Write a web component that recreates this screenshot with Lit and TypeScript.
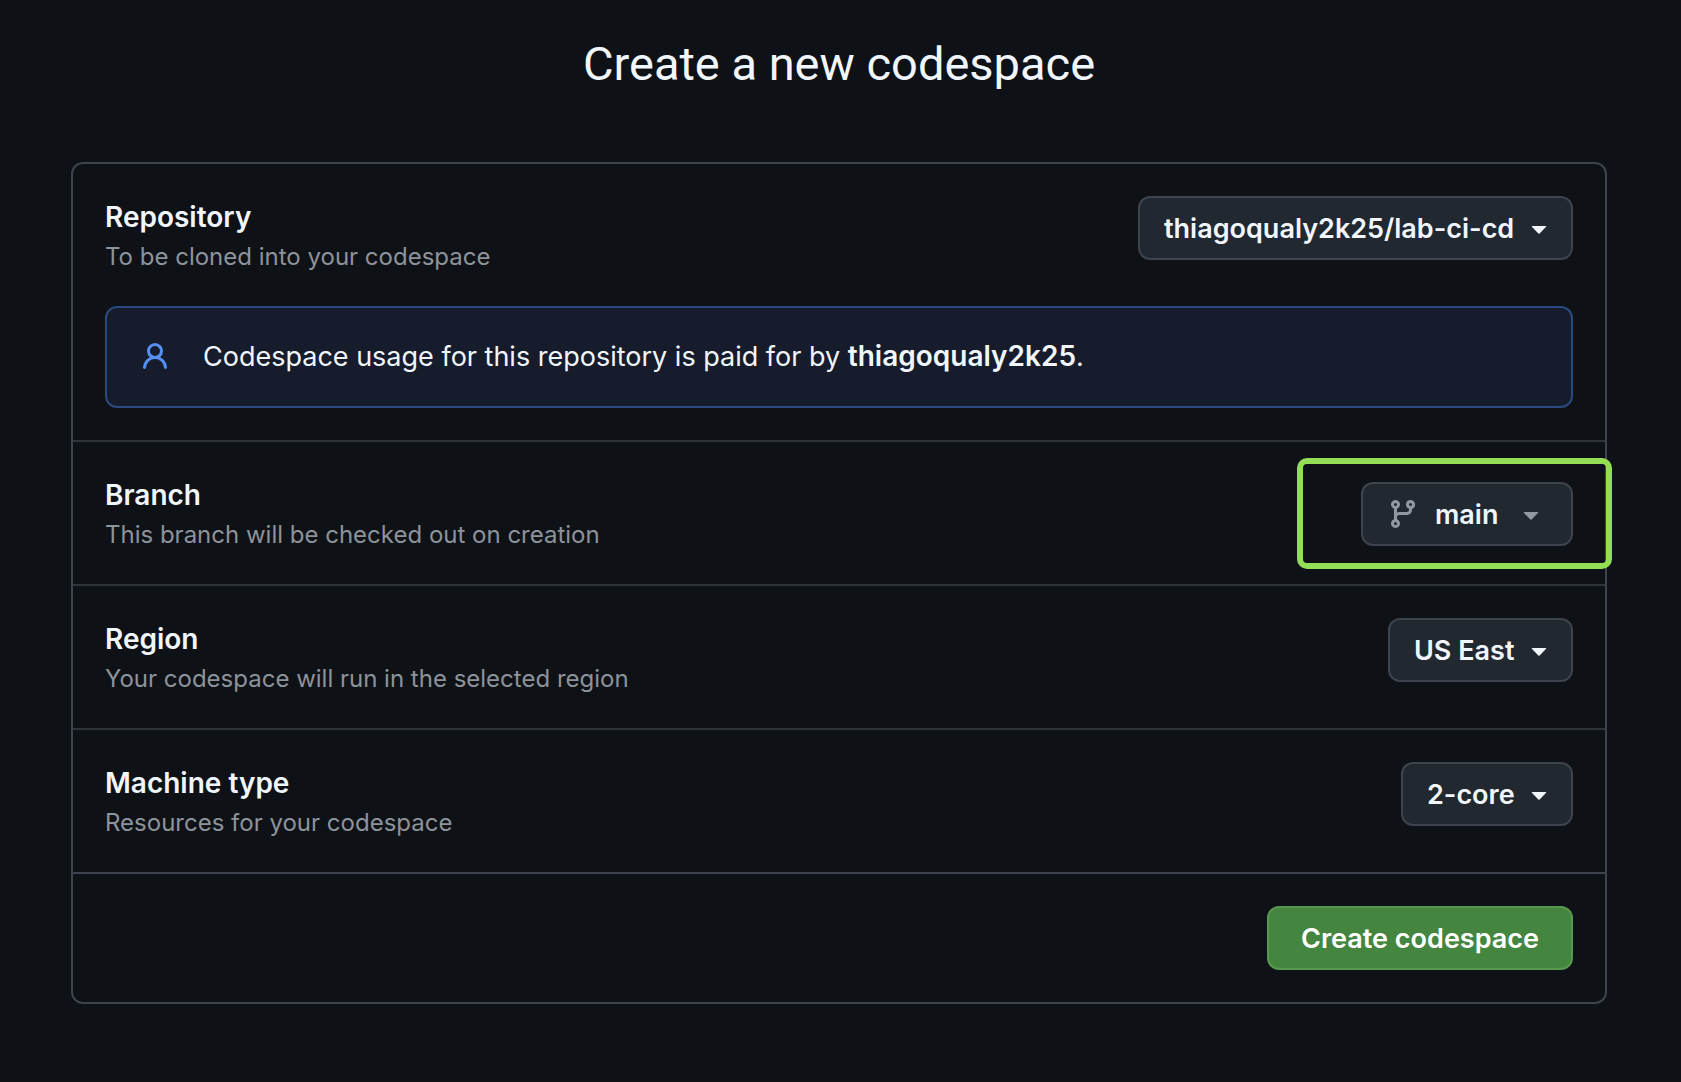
import { LitElement, html, css, svg, nothing } from "lit";
import { customElement, property } from "lit/decorators.js";

const personPath = svg`<path d="M10.561 8.073a6.005 6.005 0 0 1 3.432 5.142.75.75 0 1 1-1.498.07 4.5 4.5 0 0 0-8.99 0 .75.75 0 0 1-1.498-.07 6.004 6.004 0 0 1 3.431-5.142 3.999 3.999 0 1 1 5.123 0ZM10.5 5a2.5 2.5 0 1 0-5 0 2.5 2.5 0 0 0 5 0Z"/>`;
const branchPath = svg`<path d="M9.5 3.25a2.25 2.25 0 1 1 3 2.122V6A2.5 2.5 0 0 1 10 8.5H6a1 1 0 0 0-1 1v1.128a2.251 2.251 0 1 1-1.5 0V5.372a2.25 2.25 0 1 1 1.5 0v1.836A2.493 2.493 0 0 1 6 7h4a1 1 0 0 0 1-1v-.628A2.25 2.25 0 0 1 9.5 3.25Zm-6 0a.75.75 0 1 0 1.5 0 .75.75 0 0 0-1.5 0Zm8.25-.75a.75.75 0 1 0 0 1.5.75.75 0 0 0 0-1.5ZM4.25 12a.75.75 0 1 0 0 1.5.75.75 0 0 0 0-1.5Z"/>`;
const caretPath = svg`<path d="m4.427 7.427 3.396 3.396a.25.25 0 0 0 .354 0l3.396-3.396A.25.25 0 0 0 11.396 7H4.604a.25.25 0 0 0-.177.427Z"/>`;

interface Setting {
  id: string;
  title: string;
  hint: string;
  value: string;
  branch?: boolean;
  payer?: string;
}

const settings: Setting[] = [
  {
    id: "repository",
    title: "Repository",
    hint: "To be cloned into your codespace",
    value: "thiagoqualy2k25/lab-ci-cd",
    payer: "thiagoqualy2k25",
  },
  { id: "branch", title: "Branch", hint: "This branch will be checked out on creation", value: "main", branch: true },
  { id: "region", title: "Region", hint: "Your codespace will run in the selected region", value: "US East" },
  { id: "machine", title: "Machine type", hint: "Resources for your codespace", value: "2-core" },
];

@customElement("setting-row")
class SettingRow extends LitElement {
  @property({ attribute: false }) setting!: Setting;

  static styles = css`
    :host {
      display: block;
      padding: 32px;
    }
    .line {
      display: flex;
      justify-content: space-between;
      align-items: flex-start;
      gap: 32px;
    }
    .title {
      display: block;
      font-size: 28px;
      line-height: 43px;
      font-weight: 600;
    }
    .hint {
      margin: 0;
      font-size: 24px;
      line-height: 35px;
      color: #8d939b;
    }
    .picker {
      display: grid;
      align-items: center;
      position: relative;
      color: #f0f6fc;
    }
    .picker > * {
      grid-area: 1 / 1;
    }
    .picker.branch {
      margin-top: 8px;
    }
    .icon {
      width: 32px;
      height: 32px;
      fill: currentColor;
      pointer-events: none;
    }
    .caret {
      justify-self: end;
      margin-right: 18px;
    }
    .branch .caret {
      margin-right: 26px;
    }
    .lead {
      margin-left: 26px;
    }
    .branch .icon {
      color: #9198a1;
    }
    select {
      appearance: none;
      box-sizing: border-box;
      height: 64px;
      margin: 0;
      padding: 0 56px 0 24px;
      border: 2px solid #3d444d;
      border-radius: 12px;
      background: #212830;
      color: inherit;
      font: inherit;
      font-size: 27px;
      font-weight: 600;
      cursor: pointer;
    }
    .branch select {
      padding: 0 72px;
    }
    .highlight {
      position: absolute;
      inset: -24px -39px -23px -64px;
      border: 6px solid #94de56;
      border-radius: 10px;
      pointer-events: none;
    }
    .notice {
      display: flex;
      align-items: center;
      gap: 32px;
      margin-top: 32px;
      padding: 28px 32px;
      border: 2px solid #2b4a80;
      border-radius: 12px;
      background: #161c2b;
      font-size: 27px;
      line-height: 42px;
    }
    .notice p {
      margin: 0;
    }
    .notice b {
      font-size: 28px;
      line-height: 28px;
      font-weight: 600;
    }
    .notice .icon {
      flex: none;
      color: #5590f5;
    }
  `;

  render() {
    const s = this.setting;
    return html`
      <div class="line">
        <div>
          <label class="title" for=${s.id}>${s.title}</label>
          <p class="hint">${s.hint}</p>
        </div>
        <div class="picker ${s.branch ? "branch" : ""}">
          <select id=${s.id}>
            <option>${s.value}</option>
          </select>
          ${s.branch ? html`<svg class="icon lead" viewBox="0 0 16 16" aria-hidden="true">${branchPath}</svg>` : nothing}
          <svg class="icon caret" viewBox="0 0 16 16" aria-hidden="true">${caretPath}</svg>
          ${s.branch ? html`<span class="highlight"></span>` : nothing}
        </div>
      </div>
      ${s.payer
        ? html`<div class="notice">
            <svg class="icon" viewBox="0 0 16 16" aria-hidden="true">${personPath}</svg>
            <p>Codespace usage for this repository is paid for by <b>${s.payer}</b>.</p>
          </div>`
        : nothing}
    `;
  }
}

@customElement("app-root")
class AppRoot extends LitElement {
  static styles = css`
    :host {
      display: block;
      box-sizing: border-box;
      min-height: 100vh;
      padding: 28px 74px 78px 71px;
      background: #0e1116;
      color: #f0f6fc;
      font-family: Inter, "Liberation Sans", sans-serif;
    }
    h1 {
      margin: 0 0 62px;
      font-family: Roboto, "Liberation Sans", sans-serif;
      font-size: 47px;
      line-height: 72px;
      font-weight: 400;
      text-align: center;
    }
    .card {
      border: 2px solid #3d444d;
      border-radius: 12px;
    }
    setting-row + setting-row {
      border-top: 2px solid #2f343a;
    }
    .footer {
      display: flex;
      justify-content: flex-end;
      padding: 32px;
      border-top: 2px solid #3d444d;
    }
    .create {
      height: 64px;
      padding: 0 32px;
      border: 2px solid #58984f;
      border-radius: 12px;
      background: #448640;
      color: #ffffff;
      font: inherit;
      font-size: 27px;
      font-weight: 600;
      cursor: pointer;
    }
  `;

  render() {
    return html`
      <h1>Create a new codespace</h1>
      <form class="card" @submit=${(e: Event) => e.preventDefault()}>
        ${settings.map((s) => html`<setting-row .setting=${s}></setting-row>`)}
        <div class="footer">
          <button class="create" type="submit">Create codespace</button>
        </div>
      </form>
    `;
  }
}
